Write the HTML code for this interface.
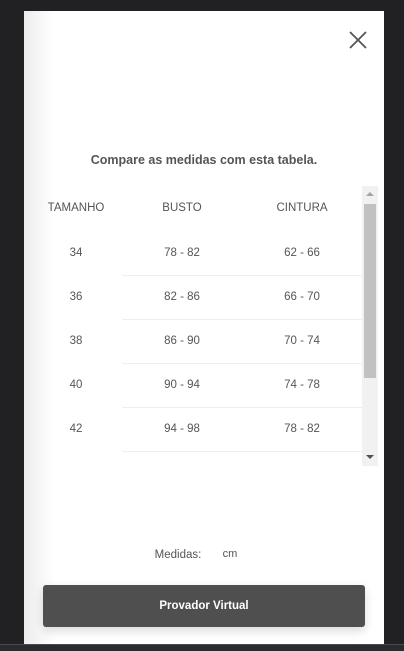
<!DOCTYPE html>
<html><head><meta charset="utf-8"><style>
*{margin:0;padding:0;box-sizing:border-box}
body{width:404px;height:651px;background:#212123;position:relative;overflow:hidden;font-family:"Liberation Sans",sans-serif;color:#555}
.panel{position:absolute;left:24px;top:11px;width:360px;height:633px;background:linear-gradient(to right,#ececec 0px,#fff 30px,#fff 100%)}
.bottom{position:absolute;left:0;top:644px;width:404px;height:7px;background:#2b2b2f;border-top:1px solid #4a4a4e}
.title{position:absolute;left:0;width:360px;top:142px;text-align:center;font-weight:bold;font-size:12.5px;color:#555}
.t{position:absolute;font-size:11.5px;color:#555;text-align:center;width:100px}
.line{position:absolute;left:98px;width:240px;height:1px;background:#eee}
.track{position:absolute;left:338px;top:175px;width:16px;height:280px;background:#f1f1f1}
.thumb{position:absolute;left:340px;top:193px;width:12px;height:174px;background:#c1c1c1}
.btn{position:absolute;left:19px;top:574px;width:322px;height:42px;background:#4f4f4f;border-radius:3px;color:#fff;font-weight:bold;font-size:11.5px;text-align:center;line-height:42px;box-shadow:0 4px 10px rgba(0,0,0,.15)}
</style></head><body>
<div class="panel">
<svg style="position:absolute;left:325px;top:20px" width="18" height="18" viewBox="0 0 18 18"><path d="M1 1L17 17M17 1L1 17" stroke="#555" stroke-width="1.8"/></svg>
<div class="title">Compare as medidas com esta tabela.</div>
<div class="t" style="left:2px;top:191px">TAMANHO</div>
<div class="t" style="left:108px;top:191px">BUSTO</div>
<div class="t" style="left:228px;top:191px">CINTURA</div>
<div class="t" style="left:2px;top:236px">34</div><div class="t" style="left:108px;top:236px">78 - 82</div><div class="t" style="left:228px;top:236px">62 - 66</div>
<div class="line" style="top:264px"></div>
<div class="t" style="left:2px;top:280px">36</div><div class="t" style="left:108px;top:280px">82 - 86</div><div class="t" style="left:228px;top:280px">66 - 70</div>
<div class="line" style="top:308px"></div>
<div class="t" style="left:2px;top:324px">38</div><div class="t" style="left:108px;top:324px">86 - 90</div><div class="t" style="left:228px;top:324px">70 - 74</div>
<div class="line" style="top:352px"></div>
<div class="t" style="left:2px;top:368px">40</div><div class="t" style="left:108px;top:368px">90 - 94</div><div class="t" style="left:228px;top:368px">74 - 78</div>
<div class="line" style="top:396px"></div>
<div class="t" style="left:2px;top:412px">42</div><div class="t" style="left:108px;top:412px">94 - 98</div><div class="t" style="left:228px;top:412px">78 - 82</div>
<div class="line" style="top:440px"></div>
<div class="track"></div><div class="thumb"></div>
<svg style="position:absolute;left:342px;top:180px" width="8" height="6"><path d="M0 5L4 1L8 5Z" fill="#a3a3a3"/></svg>
<svg style="position:absolute;left:342px;top:443px" width="8" height="6"><path d="M0 1L4 5L8 1Z" fill="#505050"/></svg>
<div class="t" style="left:128px;top:538px;width:52px;font-size:11.5px">Medidas:</div>
<div class="t" style="left:196px;top:537px;width:20px;font-size:11px">cm</div>
<div class="btn">Provador Virtual</div>
</div>
<div class="bottom"></div>
</body></html>
